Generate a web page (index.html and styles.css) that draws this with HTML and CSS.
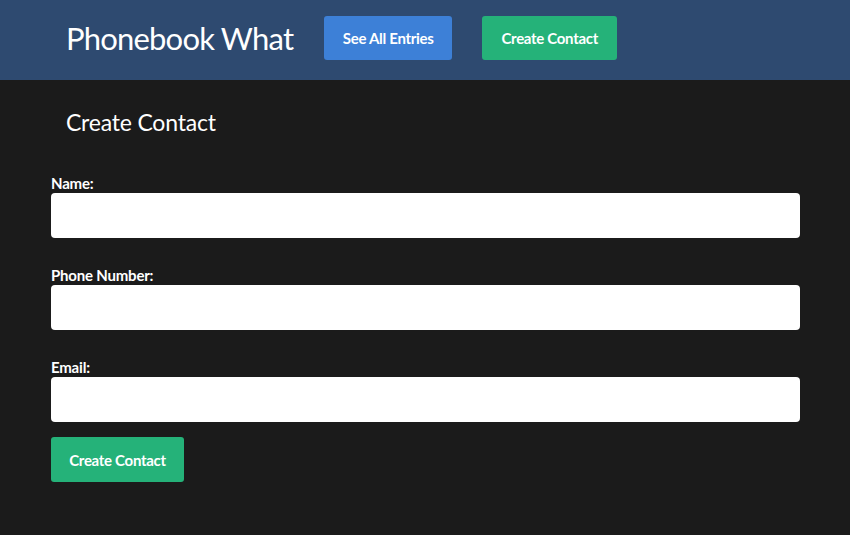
FILE: index.html
```html
<!DOCTYPE html>
<html>
<head>
<meta charset="utf-8">
<link rel="stylesheet" href="styles.css">
</head>
<body>
<nav class="navbar">
  <span class="brand">Phonebook What</span>
  <a class="btn btn-blue">See All Entries</a>
  <a class="btn btn-green">Create Contact</a>
</nav>
<main class="content">
  <h2 class="page-title">Create Contact</h2>
  <form class="form">
    <div class="field">
      <label class="label">Name:</label>
      <input class="input" type="text">
    </div>
    <div class="field">
      <label class="label">Phone Number:</label>
      <input class="input" type="text">
    </div>
    <div class="field last">
      <label class="label">Email:</label>
      <input class="input" type="text">
    </div>
    <button class="btn btn-green submit" type="button">Create Contact</button>
  </form>
</main>
</body>
</html>
```
FILE: styles.css
```css
* { box-sizing: border-box; }
html, body {
  margin: 0;
  padding: 0;
  background: #1b1b1b;
  font-family: Lato, "Open Sans", sans-serif;
  color: #fff;
}
.navbar {
  height: 80px;
  background: #2e4a70;
  display: flex;
  align-items: flex-start;
  padding: 16px 0 0 66px;
}
.brand {
  font-size: 31px;
  font-weight: 400;
  line-height: 44px;
  margin-right: 31px;
  letter-spacing: -0.8px;
  white-space: nowrap;
}
.btn {
  display: inline-flex;
  align-items: center;
  justify-content: center;
  height: 44px;
  border-radius: 3px;
  font-family: Lato, sans-serif;
  font-size: 15px;
  font-weight: 700;
  letter-spacing: -0.3px;
  color: #fff;
  border: none;
  padding: 0;
  white-space: nowrap;
}
.btn-blue { background: #3d80d7; margin-right: 30px; width: 128px; }
.btn-green { background: #25b279; width: 135px; }
.content {
  padding: 0 50px 0 51px;
}
.page-title {
  margin: 0;
  padding: 27px 0 0 15px;
  font-size: 23px;
  font-weight: 400;
  letter-spacing: -0.2px;
  line-height: 30px;
  height: 95px;
}
.form {
  display: flex;
  flex-direction: column;
}
.field {
  display: flex;
  flex-direction: column;
  margin-bottom: 29px;
}
.field.last { margin-bottom: 15px; }
.label {
  font-size: 15px;
  font-weight: 700;
  letter-spacing: -0.2px;
  line-height: 20px;
  margin-top: -2px;
}
.input {
  height: 45px;
  border: none;
  border-radius: 4px;
  background: #fff;
  width: 100%;
}
.submit {
  width: 133px;
  height: 45px;
  font-size: 15px;
}
```
